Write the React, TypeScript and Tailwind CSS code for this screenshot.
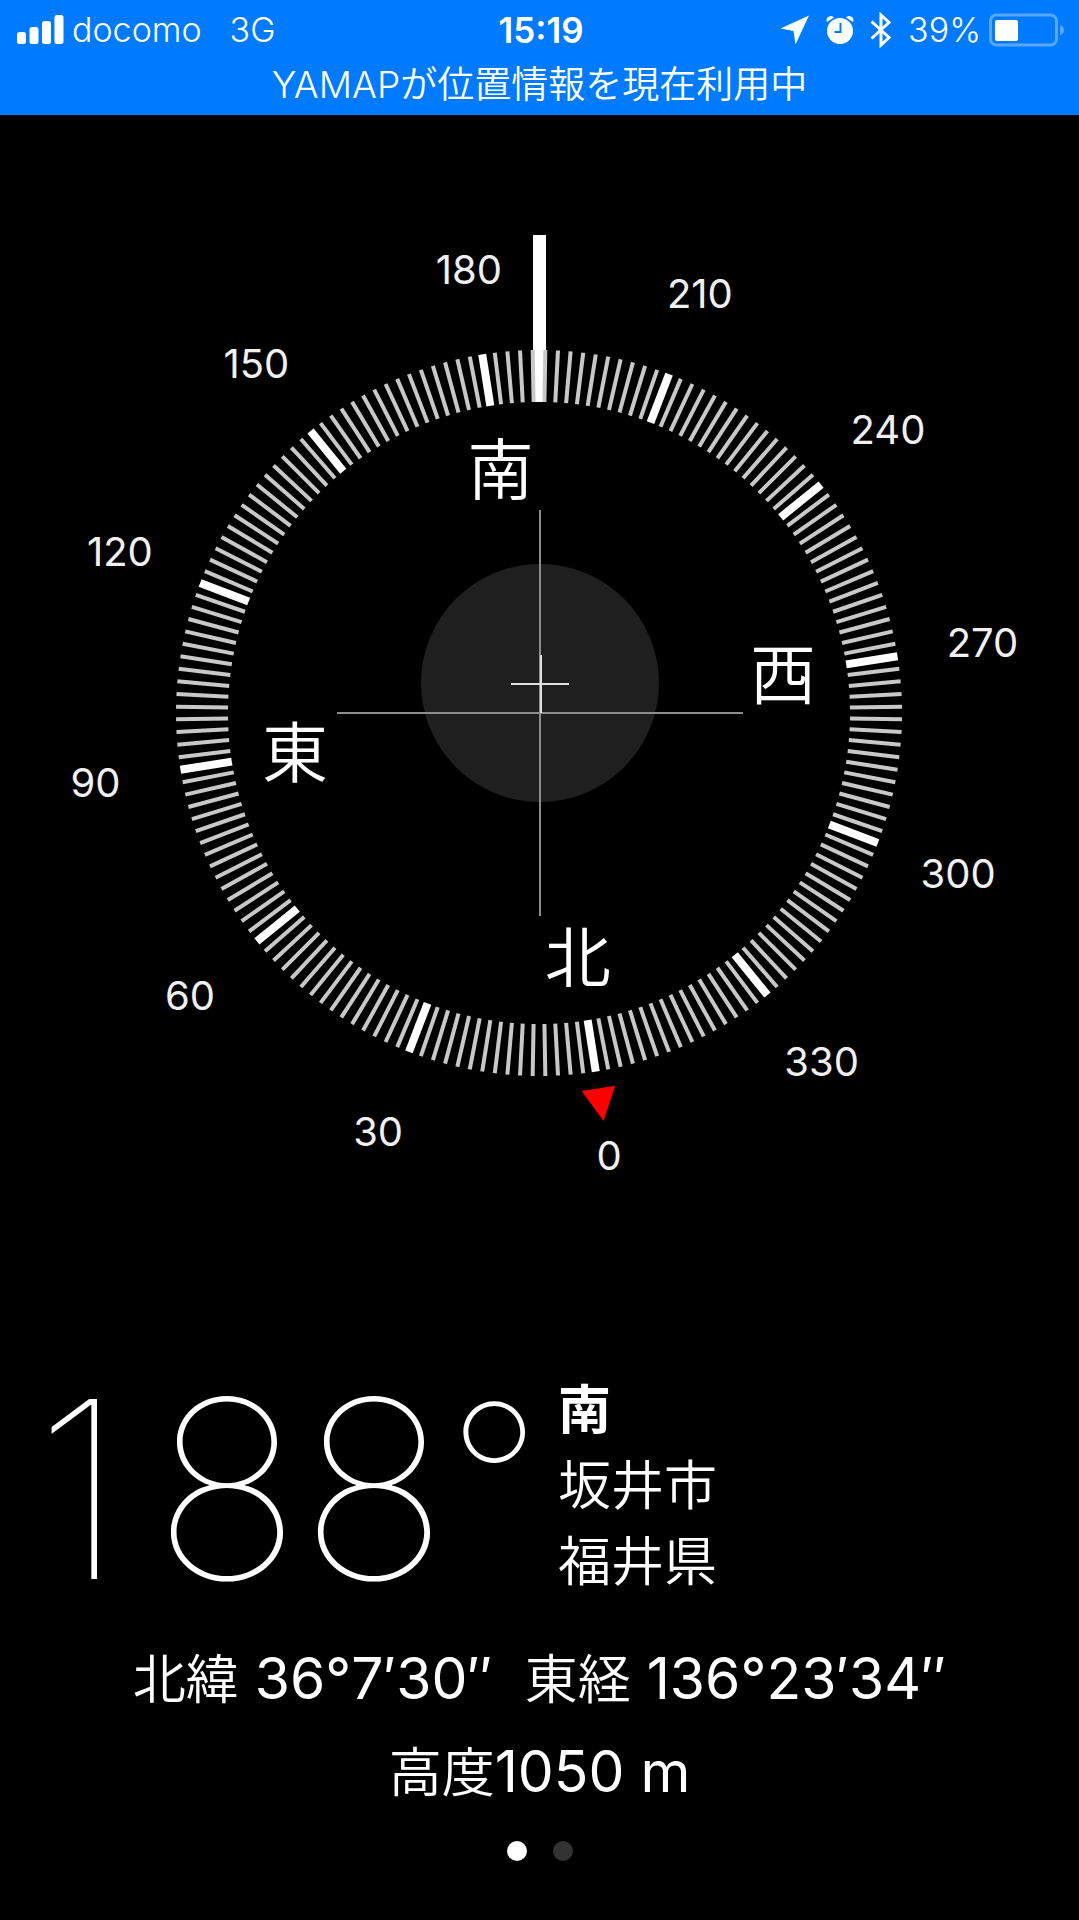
import React, { useState } from 'react';

const HEADING = 189;
const OUTER = 363;
const INNER = 311;
const LABEL_RADIUS = 449;
const KANJI_RADIUS = 247;

const ticks = Array.from({ length: 180 }, (_, i) => i * 2);
const labels = Array.from({ length: 12 }, (_, i) => i * 30);

const directions = [
  { name: '北', angle: 0 },
  { name: '東', angle: 90 },
  { name: '南', angle: 180 },
  { name: '西', angle: 270 },
];

const pages = ['コンパス', '水準器'];

// Position on the dial, with the current heading at the top
const polar = (angle: number, radius: number) => {
  const rad = ((angle - HEADING) * Math.PI) / 180;
  return { x: Math.sin(rad) * radius, y: -Math.cos(rad) * radius };
};

const SignalIcon: React.FC = () => (
  <svg viewBox="0 0 47 30" className="w-[47px] h-[30px] fill-white" aria-hidden="true">
    <rect x="0" y="17" width="9" height="12" rx="2.5" />
    <rect x="12.5" y="12" width="9" height="17" rx="2.5" />
    <rect x="25" y="6" width="9" height="23" rx="2.5" />
    <rect x="37.5" y="0" width="9" height="29" rx="2.5" />
  </svg>
);

const LocationIcon: React.FC = () => (
  <svg viewBox="0 0 30 30" className="w-[30px] h-[30px] fill-white" aria-hidden="true">
    <path d="M29 0.500 L0.500 13.500 L13.500 16 L15.500 29.500 Z" />
  </svg>
);

const AlarmIcon: React.FC = () => (
  <svg viewBox="0 0 28 30" className="w-7 h-[30px]" aria-hidden="true">
    <circle cx="14" cy="16" r="13" fill="white" />
    <path d="M1 7 Q-0.500 3 3 1.500 Q6 0 8 2.500 Z" fill="white" />
    <path d="M27 7 Q28.500 3 25 1.500 Q22 0 20 2.500 Z" fill="white" />
    <path d="M14.500 8 V17 H8.500" fill="none" stroke="#007aff" strokeWidth="2" />
  </svg>
);

const BluetoothIcon: React.FC = () => (
  <svg viewBox="0 0 22 36" className="w-[22px] h-9" aria-hidden="true">
    <path d="M1.500 9.500 L19 25.500 L11 33 V3 L19 10.500 L1.500 26.500" fill="none" stroke="white" strokeWidth="3" />
  </svg>
);

const BatteryIcon: React.FC = () => (
  <svg viewBox="0 0 76 34" className="w-[76px] h-[34px]" aria-hidden="true">
    <rect x="1.5" y="2" width="66" height="30" rx="6" fill="none" stroke="white" strokeOpacity="0.35" strokeWidth="3" />
    <rect x="6" y="7" width="23" height="21" rx="2" fill="white" />
    <path d="M71 12 Q75 13.500 75 17 Q75 20.500 71 22 Z" fill="white" fillOpacity="0.35" />
  </svg>
);

const StatusBar: React.FC = () => (
  <header className="h-[115px] bg-[#007aff] text-white">
    <div className="grid grid-cols-[1fr_auto_1fr] items-center h-[60px] pl-[17px] pr-[14px] text-[34px] leading-none">
      <div className="flex items-center">
        <SignalIcon />
        <span className="ml-2 font-[350]">docomo</span>
        <span className="ml-7 font-[350]">3G</span>
      </div>
      <time className="text-[35px] font-semibold">15:19</time>
      <div className="flex items-center justify-end">
        <LocationIcon />
        <span className="ml-4"><AlarmIcon /></span>
        <span className="ml-4"><BluetoothIcon /></span>
        <span className="ml-4 mr-2 font-[350]">39%</span>
        <BatteryIcon />
      </div>
    </div>
    <p className="text-center text-[37px] leading-[50px] font-[350]">YAMAPが位置情報を現在利用中</p>
  </header>
);

const Dial: React.FC = () => (
  <svg viewBox="-539 -480 1079 980" className="block w-full" role="img" aria-label="コンパス">
    <circle cx="1" cy="-30" r="119" fill="#1f1f1f" />
    <path d="M1 -203 V203 M-202 0 H204" stroke="#8c8c8c" strokeWidth="2" />
    <path d="M-28 -29 H30 M2 -58 V0" stroke="#e0e0e0" strokeWidth="2" />
    <rect x="-6" y="-478" width="13" height="167" fill="white" />

    {ticks.map((angle) => {
      const from = polar(angle, INNER);
      const to = polar(angle, OUTER);
      const major = angle % 30 === 0;
      return (
        <line
          key={angle}
          x1={from.x}
          y1={from.y}
          x2={to.x}
          y2={to.y}
          stroke={major ? '#ffffff' : '#c8c8c8'}
          strokeWidth={major ? 8 : 4}
        />
      );
    })}

    <polygon points="-17,-380 17,-380 0,-413" fill="#ff0000" transform={`rotate(${-HEADING})`} />

    {labels.map((angle) => {
      const { x, y } = polar(angle, LABEL_RADIUS);
      return (
        <text key={angle} x={x} y={y + 14} textAnchor="middle" className="fill-[#f0f0f0] text-[40px]">
          {angle}
        </text>
      );
    })}

    {directions.map(({ name, angle }) => {
      const { x, y } = polar(angle, KANJI_RADIUS);
      return (
        <text key={name} x={x} y={y + 25} textAnchor="middle" className="fill-white text-[66px] font-[350]">
          {name}
        </text>
      );
    })}
  </svg>
);

export default function App() {
  const [page, setPage] = useState(0);

  return (
    <div className="min-h-screen bg-black text-white font-['Inter','Noto_Sans_CJK_JP',sans-serif]" lang="ja">
      <StatusBar />

      <main className="pt-[118px]">
        <Dial />

        <section className="flex items-start gap-5 pl-[6px] pt-[156px]">
          <p className="flex items-start font-thin text-center text-[248px] leading-[240px]">
            {['1', '8', '8'].map((digit, i) => (
              <span key={i} className="w-[147px]">{digit}</span>
            ))}
            <span className="w-[91px] pt-[6px] text-[208px] leading-[208px]">°</span>
          </p>
          <div className="pt-[3px] text-[53px] leading-[76px] font-[350]">
            <p className="font-bold">南</p>
            <p>坂井市</p>
            <p>福井県</p>
          </div>
        </section>

        <section className="pt-6 text-center text-[57px] leading-[92px]">
          <p className="whitespace-pre">
            <span className="text-[53px] font-[350]">北緯</span> 36°7′30″  <span className="text-[53px] font-[350]">東経</span> 136°23′34″
          </p>
          <p>
            <span className="text-[53px] font-[350]">高度</span>1050 m
          </p>
        </section>

        <nav className="flex justify-center gap-[26px] pt-[22px]">
          {pages.map((name, i) => (
            <button
              key={name}
              aria-label={name}
              onClick={() => setPage(i)}
              className={`w-5 h-5 rounded-full ${page === i ? 'bg-white' : 'bg-[#333333]'}`}
            />
          ))}
        </nav>
      </main>
    </div>
  );
}
